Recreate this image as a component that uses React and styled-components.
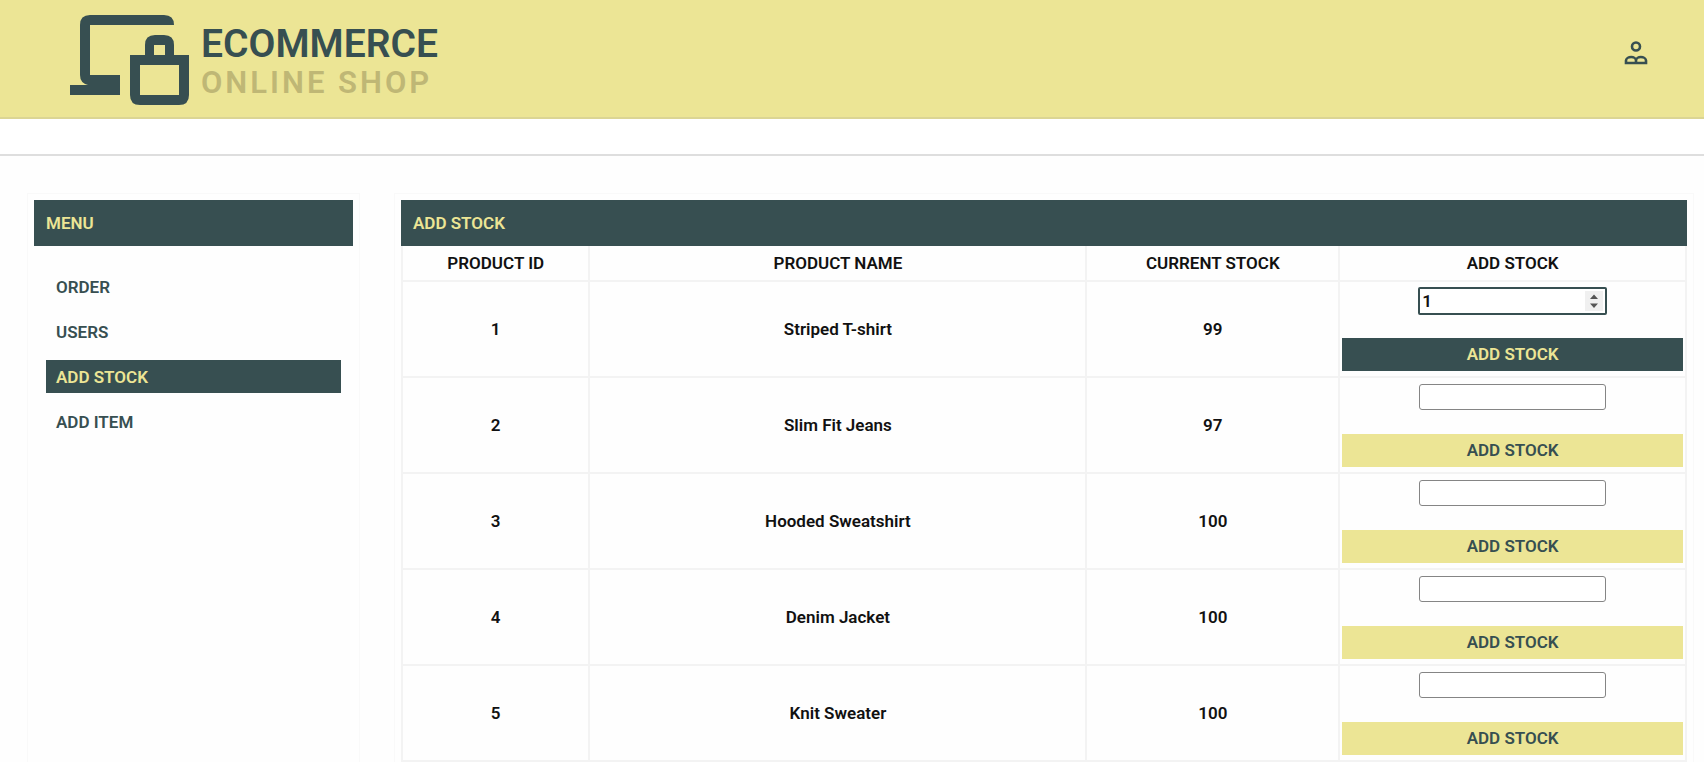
import React, { useState } from "react";
import styled, { createGlobalStyle } from "styled-components";

const dark = "#374f51";
const sand = "#ece595";
const line = "#f3f3f3";

const GlobalStyle = createGlobalStyle`
  *, *::before, *::after { box-sizing: border-box; }
  body {
    margin: 0;
    background: #fefefe;
    color: #111;
    font: 600 17px/22px Roboto, "Liberation Sans", sans-serif;
  }
  input, button { font: inherit; }
`;

const Page = styled.div`
  min-height: 100vh;
  display: flex;
  flex-direction: column;
`;

const Header = styled.header`
  display: flex;
  align-items: center;
  justify-content: space-between;
  height: 119px;
  padding: 2px 56px 0 70px;
  background: ${sand};
  border-bottom: 2px solid #dbd594;
`;

const Brand = styled.a`
  display: flex;
  align-items: center;
  gap: 11px;
  color: ${dark};
  text-decoration: none;
`;

const BrandText = styled.span`
  display: flex;
  flex-direction: column;
  padding-top: 6px;
`;

const BrandName = styled.span`
  font-size: 39px;
  line-height: 40px;
  font-weight: 600;
`;

const BrandTagline = styled.span`
  font-size: 31px;
  line-height: 38px;
  letter-spacing: 3px;
  color: #bfb775;
`;

const AccountButton = styled.button`
  display: flex;
  margin-bottom: 14px;
  padding: 0;
  border: 0;
  background: none;
  color: ${dark};
  cursor: pointer;
`;

const NavStrip = styled.div`
  height: 37px;
  background: #fff;
  border-bottom: 2px solid #dedede;
`;

const Content = styled.div`
  flex: 1;
  display: grid;
  grid-template-columns: 333px minmax(0, 1fr);
  gap: 34px;
  padding: 37px 10px 0 27px;
`;

const Panel = styled.section`
  padding: 6px 6px 0;
  border: 1px solid #f9f9f9;
  border-bottom: 0;
`;

const PanelTitle = styled.h2`
  margin: 0;
  padding: 12px;
  font-size: 17px;
  line-height: 22px;
  font-weight: 600;
  background: ${dark};
  color: ${sand};
`;

const Menu = styled.nav`
  display: flex;
  flex-direction: column;
  gap: 12px;
  padding: 24px 12px;
`;

const MenuLink = styled.a`
  padding: 6px 10px 5px;
  text-decoration: none;
  background: ${(p) => (p.$active ? dark : "transparent")};
  color: ${(p) => (p.$active ? sand : dark)};
`;

const StockTable = styled.table`
  width: 100%;
  table-layout: fixed;
  border-collapse: collapse;
  text-align: center;
`;

const Column = styled.col`
  width: ${(p) => p.$width};
`;

const HeadCell = styled.th`
  height: 35px;
  padding: 0;
  font-weight: 600;
  border: 2px solid ${line};
  border-top: 0;
`;

const Cell = styled.td`
  height: 96px;
  padding: 0;
  border: 2px solid ${line};
`;

const StockForm = styled.form`
  display: flex;
  flex-direction: column;
  align-items: center;
  gap: 24px;
  padding: 0 2px;
`;

const QuantityInput = styled.input`
  width: 187px;
  height: 26px;
  padding: 1px 2px;
  background: #fff;
  color: #111;
  border: 1px solid #858585;
  border-radius: ${(p) => (p.$active ? "1px" : "3px")};
  outline: ${(p) => (p.$active ? `2px solid ${dark}` : "none")};
  outline-offset: -1px;

  &::-webkit-inner-spin-button {
    appearance: none;
    width: 18px;
    height: 20px;
    opacity: ${(p) => (p.$active ? 1 : 0)};
    background: #f0f0f0
      url("data:image/svg+xml,%3Csvg xmlns='http://www.w3.org/2000/svg' width='18' height='20' fill='%23555'%3E%3Cpath d='M5 8L9 3.5L13 8ZM5 12.5L9 17L13 12.5Z'/%3E%3C/svg%3E")
      center no-repeat;
  }
`;

const StockButton = styled.button`
  width: 100%;
  height: 33px;
  padding: 0;
  border: 0;
  cursor: pointer;
  background: ${(p) => (p.$active ? dark : sand)};
  color: ${(p) => (p.$active ? sand : dark)};
`;

const menu = ["ORDER", "USERS", "ADD STOCK", "ADD ITEM"];

const products = [
  { id: 1, name: "Striped T-shirt", stock: 99 },
  { id: 2, name: "Slim Fit Jeans", stock: 97 },
  { id: 3, name: "Hooded Sweatshirt", stock: 100 },
  { id: 4, name: "Denim Jacket", stock: 100 },
  { id: 5, name: "Knit Sweater", stock: 100 },
];

function ShopLogo() {
  return (
    <svg width="120" height="90" viewBox="0 0 120 90" fill="currentColor" aria-hidden="true">
      <path d="M20 0H94Q104 0 104 10H20V60H50V80H0V70H18Q10 68 10 60V10Q10 0 20 0Z" />
      <path
        fillRule="evenodd"
        d="M60 40H75V30Q75 20 85 20H94Q104 20 104 30V40H119V80Q119 90 109 90H70Q60 90 60 80ZM84 30V40H95V30ZM70 50V80H109V50Z"
      />
    </svg>
  );
}

function AccountIcon() {
  return (
    <svg width="24" height="24" viewBox="0 0 24 24" fill="none" stroke="currentColor" strokeWidth="2.6" aria-hidden="true">
      <circle cx="12" cy="5.5" r="4" />
      <path d="M2 22V19.6C2 17.4 4.6 16 7.2 16C9.6 16 12 17.4 12 19.6C12 17.4 14.4 16 16.8 16C19.4 16 22 17.4 22 19.6V22ZM12 18V22" />
    </svg>
  );
}

export default function App() {
  const [active, setActive] = useState(1);
  const [amounts, setAmounts] = useState({ 1: "1" });

  return (
    <>
      <GlobalStyle />
      <Page>
        <Header>
          <Brand href="#">
            <ShopLogo />
            <BrandText>
              <BrandName>ECOMMERCE</BrandName>
              <BrandTagline>ONLINE SHOP</BrandTagline>
            </BrandText>
          </Brand>
          <AccountButton type="button" aria-label="Account">
            <AccountIcon />
          </AccountButton>
        </Header>
        <NavStrip />
        <Content>
          <Panel>
            <PanelTitle>MENU</PanelTitle>
            <Menu>
              {menu.map((label) => (
                <MenuLink key={label} href="#" $active={label === "ADD STOCK"}>
                  {label}
                </MenuLink>
              ))}
            </Menu>
          </Panel>
          <Panel>
            <PanelTitle>ADD STOCK</PanelTitle>
            <StockTable>
              <colgroup>
                <Column $width="14.6%" />
                <Column $width="38.7%" />
                <Column $width="19.7%" />
                <Column $width="27%" />
              </colgroup>
              <thead>
                <tr>
                  <HeadCell>PRODUCT ID</HeadCell>
                  <HeadCell>PRODUCT NAME</HeadCell>
                  <HeadCell>CURRENT STOCK</HeadCell>
                  <HeadCell>ADD STOCK</HeadCell>
                </tr>
              </thead>
              <tbody>
                {products.map(({ id, name, stock }) => (
                  <tr key={id}>
                    <Cell>{id}</Cell>
                    <Cell>{name}</Cell>
                    <Cell>{stock}</Cell>
                    <Cell>
                      <StockForm onSubmit={(e) => e.preventDefault()}>
                        <QuantityInput
                          type="number"
                          min="0"
                          aria-label={`Quantity for ${name}`}
                          value={amounts[id] ?? ""}
                          $active={active === id}
                          onFocus={() => setActive(id)}
                          onChange={(e) => setAmounts({ ...amounts, [id]: e.target.value })}
                        />
                        <StockButton $active={active === id}>ADD STOCK</StockButton>
                      </StockForm>
                    </Cell>
                  </tr>
                ))}
              </tbody>
            </StockTable>
          </Panel>
        </Content>
      </Page>
    </>
  );
}
